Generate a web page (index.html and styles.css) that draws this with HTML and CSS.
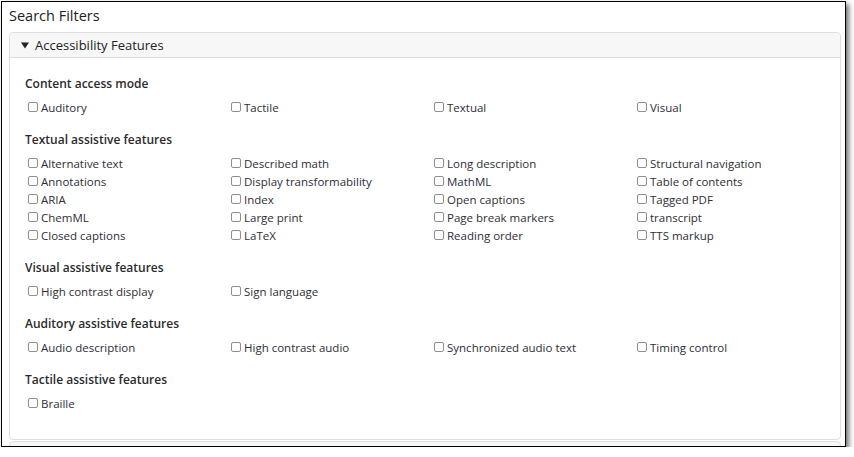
FILE: index.html
```html
<!DOCTYPE html>
<html lang="en">
<head>
    <meta charset="UTF-8">
    <title>Search Filters</title>
    <link rel="stylesheet" href="styles.css">
</head>
<body>
    <div class="window">
        <h1 class="title">Search Filters</h1>

        <section class="panel">
            <div class="panel-header">
                <svg class="caret" width="8" height="7" viewBox="0 0 8 7"><path d="M0 0.5 H8 L4 6.5 Z" fill="#222"/></svg>
                <span>Accessibility Features</span>
            </div>
            <div class="panel-body">
                <div class="group">
                    <h2 class="group-title">Content access mode</h2>
                    <div class="options">
                        <label class="option"><input type="checkbox"> Auditory</label>
                        <label class="option"><input type="checkbox"> Tactile</label>
                        <label class="option"><input type="checkbox"> Textual</label>
                        <label class="option"><input type="checkbox"> Visual</label>
                    </div>
                </div>

                <div class="group">
                    <h2 class="group-title">Textual assistive features</h2>
                    <div class="options">
                        <label class="option"><input type="checkbox"> Alternative text</label>
                        <label class="option"><input type="checkbox"> Described math</label>
                        <label class="option"><input type="checkbox"> Long description</label>
                        <label class="option"><input type="checkbox"> Structural navigation</label>
                        <label class="option"><input type="checkbox"> Annotations</label>
                        <label class="option"><input type="checkbox"> Display transformability</label>
                        <label class="option"><input type="checkbox"> MathML</label>
                        <label class="option"><input type="checkbox"> Table of contents</label>
                        <label class="option"><input type="checkbox"> ARIA</label>
                        <label class="option"><input type="checkbox"> Index</label>
                        <label class="option"><input type="checkbox"> Open captions</label>
                        <label class="option"><input type="checkbox"> Tagged PDF</label>
                        <label class="option"><input type="checkbox"> ChemML</label>
                        <label class="option"><input type="checkbox"> Large print</label>
                        <label class="option"><input type="checkbox"> Page break markers</label>
                        <label class="option"><input type="checkbox"> transcript</label>
                        <label class="option"><input type="checkbox"> Closed captions</label>
                        <label class="option"><input type="checkbox"> LaTeX</label>
                        <label class="option"><input type="checkbox"> Reading order</label>
                        <label class="option"><input type="checkbox"> TTS markup</label>
                    </div>
                </div>

                <div class="group">
                    <h2 class="group-title">Visual assistive features</h2>
                    <div class="options">
                        <label class="option"><input type="checkbox"> High contrast display</label>
                        <label class="option"><input type="checkbox"> Sign language</label>
                    </div>
                </div>

                <div class="group">
                    <h2 class="group-title">Auditory assistive features</h2>
                    <div class="options">
                        <label class="option"><input type="checkbox"> Audio description</label>
                        <label class="option"><input type="checkbox"> High contrast audio</label>
                        <label class="option"><input type="checkbox"> Synchronized audio text</label>
                        <label class="option"><input type="checkbox"> Timing control</label>
                    </div>
                </div>

                <div class="group">
                    <h2 class="group-title">Tactile assistive features</h2>
                    <div class="options">
                        <label class="option"><input type="checkbox"> Braille</label>
                    </div>
                </div>
            </div>
        </section>

        <section class="panel panel-next"></section>
    </div>
</body>
</html>
```

FILE: styles.css
```css
* {
    margin: 0;
    padding: 0;
    box-sizing: border-box;
}

body {
    background: #ffffff;
    font-family: "Open Sans", "Noto Sans", Arial, sans-serif;
    color: #333333;
}

.window {
    width: 845px;
    height: 446px;
    margin: 1px 0 0 1px;
    border: 1px solid #000000;
    background: #ffffff;
    padding: 5px 4px 0 7px;
    overflow: hidden;
    box-shadow: 3px 3px 5px rgba(0, 0, 0, 0.55);
}

.title {
    font-size: 14.5px;
    font-weight: 400;
    line-height: 18px;
    color: #222222;
    margin-bottom: 7px;
}

.panel {
    border: 1px solid #dedede;
    border-radius: 4px;
    background: #ffffff;
}

.panel-header {
    height: 25px;
    background: #f7f7f7;
    border-bottom: 1px solid #dedede;
    border-radius: 4px 4px 0 0;
    display: flex;
    align-items: center;
    gap: 6px;
    padding-left: 11px;
    font-size: 13px;
    color: #222222;
}

.caret {
    display: block;
}

.panel-body {
    padding: 16px 12px 13px 15px;
}

.group {
    margin-bottom: 14px;
}

.group-title {
    font-size: 12px;
    font-weight: 600;
    line-height: 18px;
    color: #2b2b2b;
    padding-top: 1px;
    margin-bottom: 5px;
}

.options {
    display: grid;
    grid-template-columns: repeat(4, 203px);
}

.option {
    display: flex;
    align-items: center;
    height: 18px;
    font-size: 11.5px;
    color: #2e2e38;
    white-space: nowrap;
}

.option input {
    appearance: none;
    width: 10px;
    height: 10px;
    border: 1px solid #8f8f8f;
    border-radius: 2px;
    background: #ffffff;
    margin: 0 3px 0 3px;
    flex-shrink: 0;
}

.panel-next {
    margin-top: 1px;
    height: 30px;
    background: #f7f7f7;
}
```
